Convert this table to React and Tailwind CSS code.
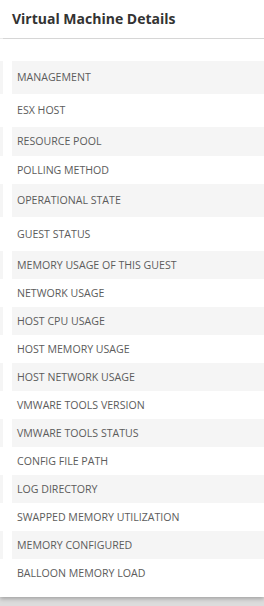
const rows = [
  ["MANAGEMENT", 33],
  ["ESX HOST", 33],
  ["RESOURCE POOL", 29],
  ["POLLING METHOD", 28],
  ["OPERATIONAL STATE", 33],
  ["GUEST STATUS", 34],
  ["MEMORY USAGE OF THIS GUEST", 28],
  ["NETWORK USAGE", 28],
  ["HOST CPU USAGE", 28],
  ["HOST MEMORY USAGE", 28],
  ["HOST NETWORK USAGE", 28],
  ["VMWARE TOOLS VERSION", 28],
  ["VMWARE TOOLS STATUS", 28],
  ["CONFIG FILE PATH", 28],
  ["LOG DIRECTORY", 28],
  ["SWAPPED MEMORY UTILIZATION", 28],
  ["MEMORY CONFIGURED", 28],
  ["BALLOON MEMORY LOAD", 28],
];

export default function App() {
  return (
    <div
      className="w-[264px] h-[606px] bg-[#dcdcdc] overflow-hidden"
      style={{ fontFamily: '"Open Sans", "Noto Sans", sans-serif' }}
    >
      {/* Card */}
      <div className="bg-white h-[597px] shadow-[0_2px_4px_rgba(0,0,0,0.25)]">
        {/* Header */}
        <div className="h-[38px] flex items-center pl-3 pb-px text-[14px] font-bold text-[#333]">
          Virtual Machine Details
        </div>
        <div className="flex h-px">
          <div className="w-[3px] bg-[#ebebeb]" />
          <div className="flex-1 bg-[#d6d6d6]" />
        </div>

        {/* Detail rows */}
        <div className="pt-[22px]">
          {rows.map(([label, h], i) => {
            const striped = i % 2 === 0;
            return (
              <div key={label} className="flex" style={{ height: h }}>
                <div className={`w-[3px] ${striped ? "bg-[#f5f5f5]" : "bg-white"}`} />
                <div className="w-[9px]" />
                <div
                  className={`flex-1 flex items-center pl-[5px] pt-px text-[10.6px] text-[#5c5c5c] ${
                    striped ? "bg-[#f5f5f5]" : "bg-white"
                  }`}
                >
                  {label}
                </div>
              </div>
            );
          })}
        </div>
      </div>
    </div>
  );
}
